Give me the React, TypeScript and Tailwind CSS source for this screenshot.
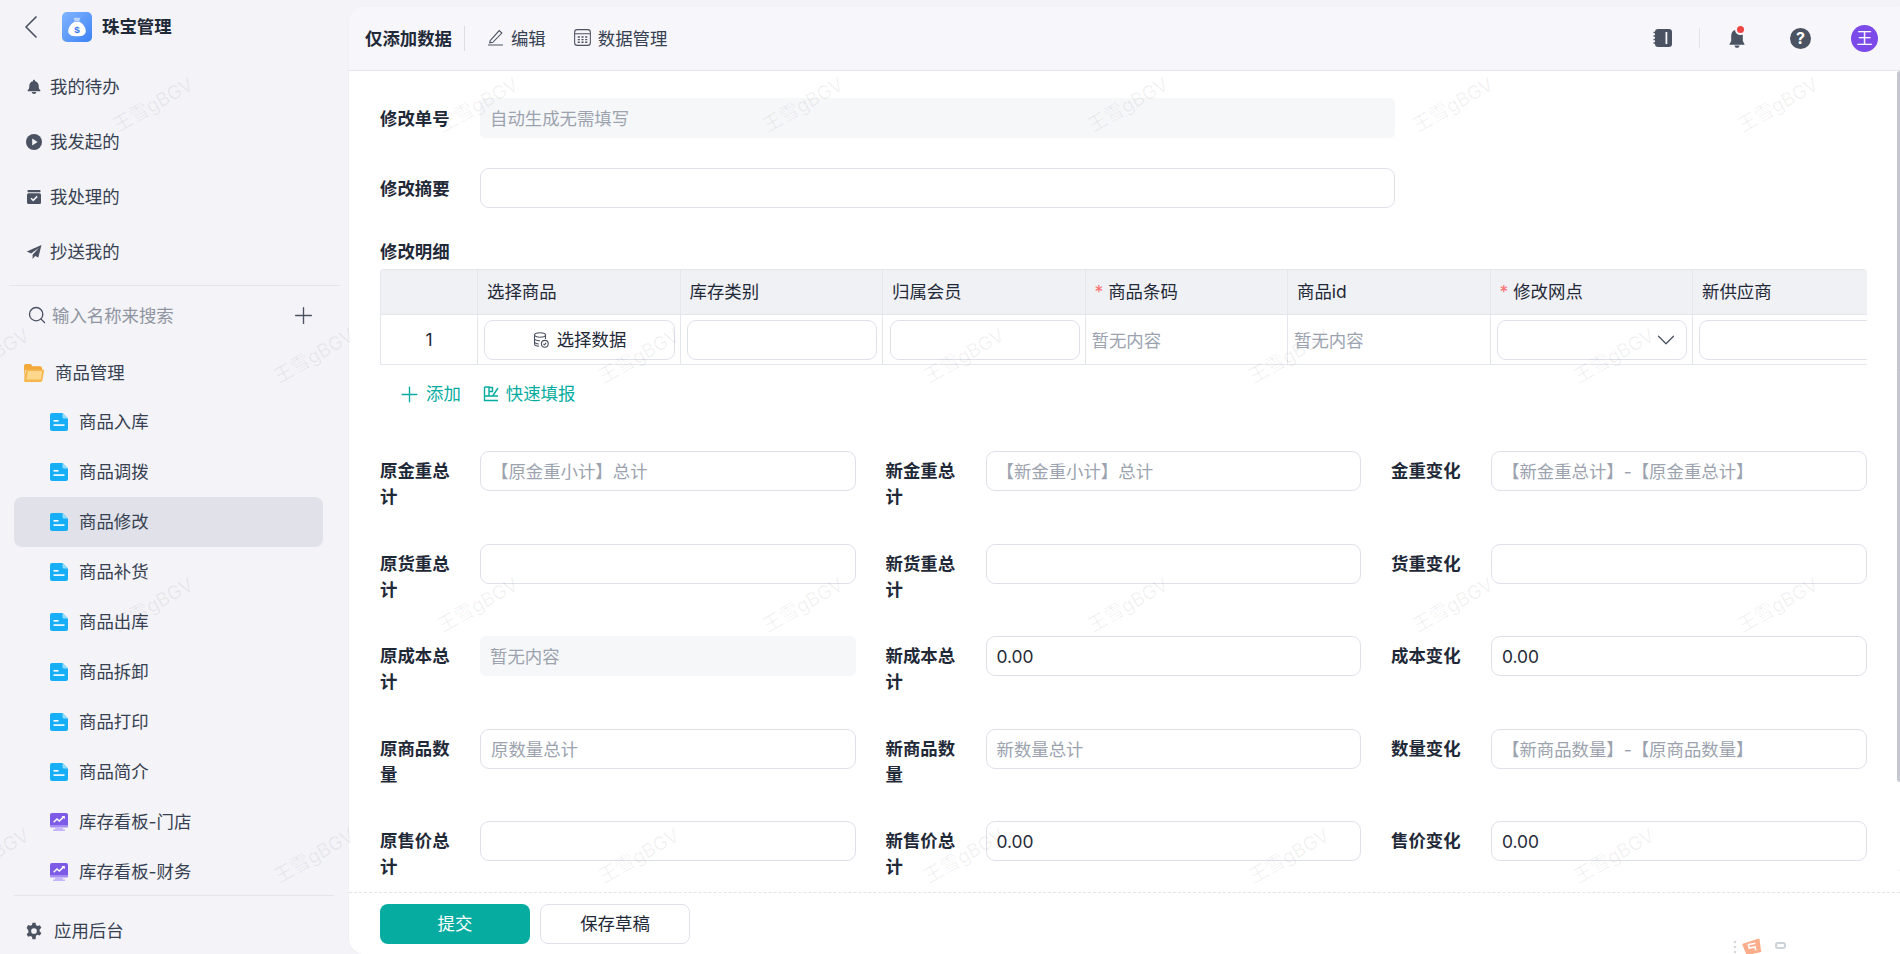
import React from 'react';
import { ChevronDown, ChevronLeft, Plus, Search } from 'lucide-react';

const FONT = '[font-family:Inter,"Noto_Sans_CJK_SC","Noto_Sans",sans-serif]';

const todoItems = [
  { label: '我的待办', icon: 'bell' },
  { label: '我发起的', icon: 'play' },
  { label: '我处理的', icon: 'box' },
  { label: '抄送我的', icon: 'send' },
];

const pageItems = [
  { label: '商品入库', kind: 'doc' },
  { label: '商品调拨', kind: 'doc' },
  { label: '商品修改', kind: 'doc', active: true },
  { label: '商品补货', kind: 'doc' },
  { label: '商品出库', kind: 'doc' },
  { label: '商品拆卸', kind: 'doc' },
  { label: '商品打印', kind: 'doc' },
  { label: '商品简介', kind: 'doc' },
  { label: '库存看板-门店', kind: 'chart' },
  { label: '库存看板-财务', kind: 'chart' },
];

const columns = [
  { label: '选择商品' },
  { label: '库存类别' },
  { label: '归属会员' },
  { label: '商品条码', required: true },
  { label: '商品id' },
  { label: '修改网点', required: true },
  { label: '新供应商' },
];

type Field = { label: string; placeholder?: string; value?: string; disabled?: boolean };

const fieldRows: Field[][] = [
  [
    { label: '原金重总计', placeholder: '【原金重小计】总计' },
    { label: '新金重总计', placeholder: '【新金重小计】总计' },
    { label: '金重变化', placeholder: '【新金重总计】-【原金重总计】' },
  ],
  [{ label: '原货重总计' }, { label: '新货重总计' }, { label: '货重变化' }],
  [
    { label: '原成本总计', placeholder: '暂无内容', disabled: true },
    { label: '新成本总计', value: '0.00' },
    { label: '成本变化', value: '0.00' },
  ],
  [
    { label: '原商品数量', placeholder: '原数量总计' },
    { label: '新商品数量', placeholder: '新数量总计' },
    { label: '数量变化', placeholder: '【新商品数量】-【原商品数量】' },
  ],
  [
    { label: '原售价总计' },
    { label: '新售价总计', value: '0.00' },
    { label: '售价变化', value: '0.00' },
  ],
];

const SideIcon = ({ name }: { name: string }) => {
  if (name === 'bell')
    return (
      <svg viewBox="0 0 16 16" className="h-4 w-4 fill-[#4b5261]">
        <path d="M8 .8c.6 0 1 .4 1 1v.4c2.4.5 3.7 2.4 3.7 4.8 0 2.2.5 3.4 1.6 4.3.3.3.2.9-.3.9H2c-.5 0-.6-.6-.3-.9C2.8 10.4 3.3 9.200 3.3 7c0-2.4 1.300-4.3 3.7-4.8v-.4c0-.6.4-1 1-1z" />
        <path d="M5.700 13h4.600c-.2 1.200-1.100 2-2.300 2s-2.100-.8-2.300-2z" />
      </svg>
    );
  if (name === 'play')
    return (
      <svg viewBox="0 0 16 16" className="h-4 w-4">
        <circle cx="8" cy="8" r="8" fill="#4b5261" />
        <path d="M6.200 4.600v6.800L11.600 8z" fill="#f3f3f8" />
      </svg>
    );
  if (name === 'box')
    return (
      <svg viewBox="0 0 16 16" className="h-4 w-4">
        <rect x="1.5" y="1" width="13" height="2.2" rx=".8" fill="#4b5261" />
        <rect x="1" y="4.2" width="14" height="10.8" rx="1.5" fill="#4b5261" />
        <path d="M5 9.200l2.200 2.200L11.200 7.400" fill="none" stroke="#f3f3f8" strokeWidth="1.5" />
      </svg>
    );
  return (
    <svg viewBox="0 0 16 16" className="h-4 w-4 fill-[#4b5261]">
      <path d="M15.500 1 .8 7.600l4.300 2L13 3.800 6.600 10.700v4.300l2.500-3 3.200 1.500z" />
    </svg>
  );
};

const DocIcon = () => (
  <svg viewBox="0 0 18 18" className="h-[18px] w-[18px] shrink-0">
    <path d="M2 0h10.500L18 5.500V16a2 2 0 0 1-2 2H2a2 2 0 0 1-2-2V2a2 2 0 0 1 2-2z" fill="#16aef7" />
    <path d="M12.500 0 18 5.500h-4a1.500 1.500 0 0 1-1.500-1.500z" fill="#8fdcfd" />
    <rect x="3.5" y="7" width="5" height="1.6" fill="#fff" />
    <rect x="3.5" y="11.300" width="11" height="1.6" fill="#fff" />
  </svg>
);

const ChartIcon = () => (
  <svg viewBox="0 0 18 18" className="h-[18px] w-[18px] shrink-0">
    <rect x="0" y="0" width="18" height="13.5" rx="2" fill="#7c5ce6" />
    <rect x="0" y="12" width="18" height="2.5" rx="1" fill="#a78bf5" />
    <path d="M5.500 14.500h7l.7 2H15V18H3v-1.500h1.800z" fill="#c4b5fb" />
    <path d="M3.600 9.200 7 6l2.200 2 4.800-4.400" fill="none" stroke="#fff" strokeWidth="1.5" />
    <path d="M11.600 3h3.200v3.200z" fill="#fff" />
  </svg>
);

const FolderIcon = () => (
  <svg viewBox="0 0 20 18" className="h-[18px] w-5 shrink-0">
    <path d="M2 0h4.500l2 2.200H16c1.100 0 2 .9 2 2V6H1l-1 10V2a2 2 0 0 1 2-2z" fill="#f3a93a" />
    <path d="M3.400 5.500H19a1 1 0 0 1 1 1.200l-1.500 9.500a2 2 0 0 1-2 1.800H1.500A1.500 1.500 0 0 1 .1 16.200l1.500-9.200a1.800 1.800 0 0 1 1.800-1.500z" fill="#f6b74f" />
    <path d="M4 7h14.200l-1.200 8.500H2.400z" fill="#fdd88c" />
  </svg>
);

const Sidebar = () => (
  <aside className="flex h-full w-[349px] shrink-0 flex-col bg-[#f3f3f8] text-[17.4px] text-[#374151]">
    <div className="flex h-[54px] shrink-0 items-center pl-[11px]">
      <ChevronLeft className="h-10 w-10 text-[#4b5261]" strokeWidth={1} />
      <div className="ml-[11px] flex h-[30px] w-[30px] items-center justify-center rounded-[5px] bg-gradient-to-br from-[#82b4fd] to-[#3b82f6]">
        <svg viewBox="0 0 18 20" className="h-[22px] w-[20px]">
          <path d="M6 1.500h6l-1 3.200H7z" fill="#bcd6fd" />
          <path d="M6.600 5.200h4.800C15 7.300 17 10.500 17 13.600c0 3.300-2.600 4.900-8 4.900s-8-1.600-8-4.900c0-3.100 2-6.300 5.600-8.400z" fill="#fff" />
          <text x="9" y="15.400" textAnchor="middle" fontSize="9" fontWeight="700" fill="#2f74e8" fontFamily="Liberation Sans, sans-serif">$</text>
        </svg>
      </div>
      <span className="ml-[10px] font-bold text-[#1f2937]">珠宝管理</span>
    </div>

    <nav className="flex shrink-0 flex-col pt-[5px]">
      {todoItems.map((item) => (
        <div key={item.label} className="flex h-[55px] items-center gap-2 pl-[26px]">
          <SideIcon name={item.icon} />
          <span className="pt-[1px]">{item.label}</span>
        </div>
      ))}
    </nav>

    <div className="mx-[9px] mt-[6px] h-px shrink-0 bg-[#e5e6ec]" />
    <div className="flex h-[58px] shrink-0 items-center pl-[27px] pr-[32px]">
      <Search className="h-5 w-5 text-[#4b5261]" strokeWidth={1.6} />
      <span className="ml-[5px] flex-1 pt-[2px] text-[#8f95a1]">输入名称来搜索</span>
      <Plus className="h-[27px] w-[27px] text-[#4b5261]" strokeWidth={1.2} />
    </div>

    <div className="flex h-[53px] shrink-0 items-center gap-[11px] pl-6 pt-[5px]">
      <FolderIcon />
      <span>商品管理</span>
    </div>

    <div className="flex shrink-0 flex-col">
      {pageItems.map((item) => (
        <div
          key={item.label}
          className={
            item.active
              ? 'ml-[14px] flex h-[50px] w-[309px] items-center gap-[11px] rounded-lg bg-[#e0e1e9] pl-[36px]'
              : 'ml-[14px] flex h-[50px] w-[309px] items-center gap-[11px] pl-[36px]'
          }
        >
          {item.kind === 'doc' ? <DocIcon /> : <ChartIcon />}
          <span className="pt-[1px]">{item.label}</span>
        </div>
      ))}
    </div>

    <div className="-mt-[2px] ml-[14px] mr-[15px] h-px shrink-0 bg-[#e5e6ec]" />
    <div className="flex flex-1 items-center gap-[11px] pl-[25px] pt-[12px]">
      <svg viewBox="0 0 24 24" className="h-[18px] w-[18px] fill-[#4b5261]">
        <path d="M10 1h4l.7 3.200c.7.3 1.400.6 2 1.100l3.100-1 2 3.500-2.400 2.200a8 8 0 0 1 0 2.300l2.400 2.200-2 3.500-3.100-1c-.6.5-1.300.8-2 1.100L14 23h-4l-.7-3.200c-.7-.3-1.400-.6-2-1.100l-3.100 1-2-3.500 2.400-2.200a8 8 0 0 1 0-2.300L2.200 7.500l2-3.500 3.100 1c.6-.5 1.300-.8 2-1.100zM12 8.200a3.800 3.800 0 1 0 0 7.600 3.800 3.800 0 0 0 0-7.600z" fillRule="evenodd" />
      </svg>
      <span className="pt-[1px]">应用后台</span>
    </div>
  </aside>
);

const Header = () => (
  <header className="flex h-[65px] shrink-0 items-center border-b border-[#e5e6ec] bg-[#f6f6fb] pl-[16px] pr-[22px] text-[17.4px] text-[#374151]">
    <span className="pt-[2px] font-bold text-[#1f2937]">仅添加数据</span>
    <div className="ml-[12px] h-[25px] w-px bg-[#dcdee5]" />
    <div className="ml-[22px] flex items-center gap-[7px]">
      <svg viewBox="0 0 16 16" className="h-[17px] w-[17px] fill-none stroke-[#4b5261]" strokeWidth="1">
        <path d="M3 11 11.500 1.500 14 3.800 5.500 12.500l-3 .5z" />
        <path d="M1 15h14" />
      </svg>
      <span className="pt-[2px]">编辑</span>
    </div>
    <div className="ml-[28px] flex items-center gap-[7px]">
      <svg viewBox="0 0 16 16" className="h-[17px] w-[17px] fill-none stroke-[#4b5261]" strokeWidth="1">
        <rect x=".6" y=".6" width="14.8" height="14.8" rx="2.5" />
        <path d="M.6 4.500h14.800" />
        <path d="M3.500 7.500h9M3.500 10h9M3.500 12.500h9" strokeDasharray="2 1.5" strokeWidth="1.3" />
      </svg>
      <span className="pt-[2px]">数据管理</span>
    </div>

    <div className="ml-auto flex items-center">
      <svg viewBox="0 0 20 20" className="h-5 w-5">
        <rect x="2" y="1" width="17" height="18" rx="3" fill="#4b5261" />
        <path d="M.5 4.500h3M.5 8h3M.5 11.500h3M.5 15h3" stroke="#4b5261" strokeWidth="1.4" />
        <rect x="12.5" y="4" width="1.8" height="12" fill="#f6f6fb" />
      </svg>
      <div className="ml-[26px] h-[20px] w-px bg-[#e3e4ea]" />
      <div className="relative ml-[28px] h-5 w-[18px]">
        <svg viewBox="0 0 18 20" className="h-5 w-[18px] fill-[#4b5261]">
          <path d="M9 0c.7 0 1.200.5 1.200 1.200v.5c3 .6 4.600 3 4.600 6v5.200l1.700 3.300c.1.300 0 .6-.4.600H1.900c-.4 0-.5-.3-.4-.6l1.700-3.300V7.700c0-3 1.600-5.400 4.600-6v-.5C7.800.5 8.300 0 9 0z" />
          <path d="M6.500 17.500h5c-.2 1.400-1.200 2.300-2.500 2.300s-2.300-.9-2.500-2.300z" />
        </svg>
        <span className="absolute right-[2px] top-[-2px] h-[7px] w-[7px] rounded-full bg-[#ef4444] ring-2 ring-[#f6f6fb]" />
      </div>
      <div className="ml-[44px] flex h-[21px] w-[21px] items-center justify-center rounded-full bg-[#4b5261] text-[16px] font-bold leading-none text-white">
        ?
      </div>
      <div className="ml-[40px] flex h-[27px] w-[27px] items-center justify-center rounded-full bg-[#7c4ae8] text-[16px] leading-none text-white">
        王
      </div>
    </div>
  </header>
);

const TextBox = ({ field, width }: { field: Field; width: string }) => (
  <div
    className={
      field.disabled
        ? `flex h-10 ${width} shrink-0 items-center rounded-[5px] bg-[#f6f7f9] px-[10px] pt-[3px] text-[#9ca3af]`
        : `flex h-10 ${width} shrink-0 items-center rounded-[9px] border border-[#dfe1ea] bg-white px-[10px] pt-[3px] ${field.value ? 'text-[#1f2937]' : 'text-[#9ca3af]'}`
    }
  >
    {field.value || field.placeholder}
  </div>
);

const DetailTable = () => (
  <div className="mr-[33px] overflow-hidden rounded-t-[4px] border-y border-l border-[#e5e7ee]">
    <div className="flex h-[45px] bg-[#f0f1f5]">
      <div className="w-[97px] shrink-0 border-r border-b border-[#e5e7ee]" />
      {columns.map((col) => (
        <div
          key={col.label}
          className="flex w-[202.5px] shrink-0 items-center whitespace-nowrap border-r border-b border-[#e5e7ee] pl-[9px] text-[#1f2937]"
        >
          {col.required && <span className="mr-[5px] text-[#f87171]">*</span>}
          {col.label}
        </div>
      ))}
    </div>
    <div className="flex h-[49px]">
      <div className="flex w-[97px] shrink-0 items-center justify-center border-r border-[#e5e7ee] pt-[2px] text-[#1f2937]">1</div>
      <div className="flex w-[202.5px] shrink-0 items-center border-r border-[#e5e7ee] pl-[6px]">
        <div className="flex h-10 w-[191px] items-center justify-center gap-[8px] rounded-[9px] border border-[#dfe1ea] text-[#1f2937]">
          <svg viewBox="0 0 16 16" className="h-4 w-4 fill-none stroke-[#4b5261]" strokeWidth="1.1">
            <ellipse cx="7" cy="3" rx="5.5" ry="2.2" />
            <path d="M1.500 3v9c0 1.200 2.200 2.200 4.700 2.200M12.500 3v4M1.500 6.500c0 1.200 2.400 2.200 5.500 2.200M1.500 9.800c0 1.100 1.800 2 4.300 2.200" />
            <circle cx="11.8" cy="11.8" r="3.4" />
            <path d="M10.400 11.800l1 1 1.700-1.800" />
          </svg>
          <span className="pt-[2px]">选择数据</span>
        </div>
      </div>
      <div className="flex w-[202.5px] shrink-0 items-center border-r border-[#e5e7ee] pl-[6px]">
        <div className="h-10 w-[190px] rounded-[9px] border border-[#dfe1ea]" />
      </div>
      <div className="flex w-[202.5px] shrink-0 items-center border-r border-[#e5e7ee] pl-[7px]">
        <div className="h-10 w-[190px] rounded-[9px] border border-[#dfe1ea]" />
      </div>
      {[0, 1].map((i) => (
        <div key={i} className="flex w-[202.5px] shrink-0 items-center border-r border-[#e5e7ee] pl-[6px] pt-[3px] text-[#9ca3af]">
          暂无内容
        </div>
      ))}
      <div className="flex w-[202.5px] shrink-0 items-center border-r border-[#e5e7ee] pl-[6px]">
        <div className="flex h-10 w-[190px] items-center justify-end rounded-[9px] border border-[#dfe1ea] pr-[5px]">
          <ChevronDown className="h-[30px] w-[30px] text-[#4b5261]" strokeWidth={1} />
        </div>
      </div>
      <div className="flex w-[202.5px] shrink-0 items-center pl-[6px]">
        <div className="h-10 w-[190px] rounded-[9px] border border-[#dfe1ea]" />
      </div>
    </div>
  </div>
);

const Watermarks = () => {
  const rows = [105, 356, 605, 856];
  const cols = [0, 1, 2, 3, 4, 5, 6];
  return (
    <div className="pointer-events-none absolute inset-0 overflow-hidden">
      {rows.map((y, r) =>
        cols.map((c) => (
          <span
            key={`${r}-${c}`}
            className="absolute -translate-x-1/2 -translate-y-1/2 -rotate-[30deg] whitespace-nowrap text-[19px] leading-none text-black/[0.06]"
            style={{ left: (r % 2 === 0 ? 153 : -11) + c * 325, top: y }}
          >
            王雪gBGV
          </span>
        )),
      )}
    </div>
  );
};

export default function App() {
  return (
    <div className={`relative flex h-[954px] w-[1900px] overflow-hidden bg-[#f3f3f8] ${FONT}`}>
      <Sidebar />
      <main className="mt-[6px] flex min-w-0 flex-1 flex-col overflow-hidden rounded-l-[16px] bg-white text-[17.4px] shadow-[0_0_2px_rgba(0,0,0,0.06)]">
        <Header />
        <div className="relative min-h-0 flex-1 overflow-hidden pl-[31px] pt-[27px] text-[#1f2937]">
          <div className="absolute right-0 top-0 h-[711px] w-[3px] rounded-l bg-[#c5c7d0]" />
          <div className="flex flex-col gap-[30px]">
            <div className="flex items-center">
              <span className="w-[100px] shrink-0 pt-[2px] font-bold">修改单号</span>
              <TextBox field={{ label: '', placeholder: '自动生成无需填写', disabled: true }} width="w-[915px]" />
            </div>
            <div className="flex items-center">
              <span className="w-[100px] shrink-0 pt-[2px] font-bold">修改摘要</span>
              <TextBox field={{ label: '' }} width="w-[915px]" />
            </div>
          </div>
          <div className="mt-[31px] font-bold leading-[26px]">修改明细</div>
          <div className="mt-[4px]">
            <DetailTable />
          </div>
          <div className="mt-[16px] flex h-[26px] items-center pl-[17px] text-[#05ac9f]">
            <Plus className="h-[25px] w-[25px]" strokeWidth={1.3} />
            <span className="ml-[4px]">添加</span>
            <svg viewBox="0 0 16 16" className="ml-[22px] h-4 w-4 fill-none stroke-[#05ac9f]" strokeWidth="1.4">
              <path d="M1.500 1v13.500H15M1.500 1H6v9H1.500M6 5.500h3.500V1.500h-3.500M15 2l-5 7.500M6 10h9" />
            </svg>
            <span className="ml-[7px]">快速填报</span>
          </div>
          <div className="mt-[44px] flex flex-col gap-[52.5px]">
            {fieldRows.map((row, r) => (
              <div key={r} className="flex h-10">
                {row.map((field) => (
                  <div key={field.label} className="mr-[30px] flex w-[475.5px] shrink-0 items-start">
                    <span className="mt-[7px] w-[100px] shrink-0 pr-[18px] font-bold leading-[26px]">{field.label}</span>
                    <TextBox field={field} width="w-[375.5px]" />
                  </div>
                ))}
              </div>
            ))}
          </div>
        </div>
        <footer className="relative flex h-[62px] shrink-0 items-start gap-[10px] border-t border-dashed border-[#e3e4ea] bg-white pl-[31px] pt-[11px]">
          <div className="flex h-10 w-[150px] items-center justify-center rounded-[8px] bg-[#05ac9f] text-white">提交</div>
          <div className="flex h-10 w-[150px] items-center justify-center rounded-[8px] border border-[#dfe1ea] text-[#1f2937]">保存草稿</div>
          <div className="absolute bottom-0 left-[1384px] flex h-[14px] items-start gap-[5px] opacity-70">
            <svg viewBox="0 0 4 14" className="h-[14px] w-1 fill-[#c8c8cc]">
              <circle cx="2" cy="2" r="1.3" />
              <circle cx="2" cy="7" r="1.3" />
              <circle cx="2" cy="12" r="1.3" />
            </svg>
            <svg viewBox="0 0 20 14" className="h-[14px] w-5 -rotate-12">
              <path d="M1 2 19 0l-1 14H3z" fill="#fb8b5b" />
              <path d="M14 4H7v3.500h6V11" fill="none" stroke="#fff" strokeWidth="1.6" />
            </svg>
            <div className="ml-[8px] mt-[2px] h-[7px] w-[11px] rounded-[3px] border-2 border-[#b7bfc9]" />
          </div>
        </footer>
      </main>
      <Watermarks />
    </div>
  );
}
